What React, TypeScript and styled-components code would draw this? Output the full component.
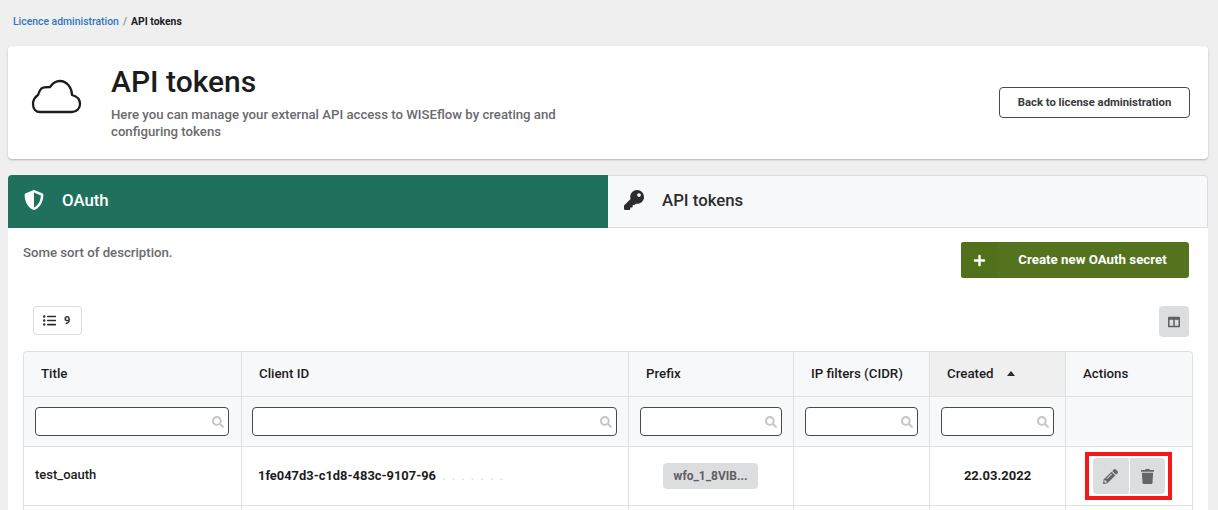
import React, { FC } from 'react';
import styled, { createGlobalStyle } from 'styled-components';
import { FaColumns, FaKey, FaListUl, FaPencilAlt, FaPlus, FaSearch, FaShieldAlt, FaTrash } from 'react-icons/fa';

const GlobalStyle = createGlobalStyle`
  html, body {
    margin: 0;
    height: 510px;
    overflow: hidden;
    background: #efefef;
    font-family: Roboto, "Noto Sans", sans-serif;
    color: #1c1c1e;
  }
  * {
    box-sizing: border-box;
  }
`;

type Column = {
  title: string;
  width: number;
  sorted?: boolean;
};

const columns: Column[] = [
  { title: 'Title', width: 218 },
  { title: 'Client ID', width: 387 },
  { title: 'Prefix', width: 165 },
  { title: 'IP filters (CIDR)', width: 136 },
  { title: 'Created', width: 136, sorted: true },
  { title: 'Actions', width: 128 },
];

const CloudIcon: FC = () => (
  <svg width="51" height="35" viewBox="0 0 51 35" fill="none">
    <path
      d="M9 33H41C46 33 49 29 49 25C49 20 45 17 41 16C41 9 36 2 29 2C24 2 21 5 19 8C15 8 11 8 10 10C8 12 8 14 7 16C4 18 2 21 2 25C2 30 5 33 9 33Z"
      stroke="#1c1c1e"
      strokeWidth="2.300"
      strokeLinejoin="round"
    />
  </svg>
);

const App: FC = () => (
  <>
    <GlobalStyle />
    <Page>
      <Breadcrumb>
        <CrumbLink>Licence administration</CrumbLink>
        <CrumbSeparator>/</CrumbSeparator>
        <CrumbCurrent>API tokens</CrumbCurrent>
      </Breadcrumb>
      <HeaderCard>
        <HeaderIcon>
          <CloudIcon />
        </HeaderIcon>
        <HeaderText>
          <PageTitle>API tokens</PageTitle>
          <PageDescription>
            Here you can manage your external API access to WISEflow by creating and configuring tokens
          </PageDescription>
        </HeaderText>
        <BackButton>Back to license administration</BackButton>
      </HeaderCard>
      <Panel>
        <Tabs>
          <Tab $active>
            <FaShieldAlt size={20} />
            <span>OAuth</span>
          </Tab>
          <Tab>
            <FaKey size={20} />
            <span>API tokens</span>
          </Tab>
        </Tabs>
        <PanelBody>
          <TopRow>
            <Description>Some sort of description.</Description>
            <CreateButton>
              <CreateIcon>
                <FaPlus size={13} />
              </CreateIcon>
              <CreateLabel>Create new OAuth secret</CreateLabel>
            </CreateButton>
          </TopRow>
          <ToolRow>
            <CountButton>
              <FaListUl size={13} />
              <span>9</span>
            </CountButton>
            <ColumnsButton>
              <FaColumns size={12} />
            </ColumnsButton>
          </ToolRow>
          <TableFrame>
            <Table>
              <colgroup>
                {columns.map((column) => (
                  <col key={column.title} width={column.width} />
                ))}
              </colgroup>
              <thead>
                <HeadRow>
                  {columns.map((column) => (
                    <HeadCell key={column.title} $sorted={column.sorted}>
                      {column.title}
                      {column.sorted && <SortArrow />}
                    </HeadCell>
                  ))}
                </HeadRow>
                <FilterRow>
                  {columns.map((column) => (
                    <FilterCell key={column.title}>
                      {column.title !== 'Actions' && (
                        <FilterBox>
                          <FaSearch size={12} />
                        </FilterBox>
                      )}
                    </FilterCell>
                  ))}
                </FilterRow>
              </thead>
              <tbody>
                <DataRow>
                  <TitleCell>test_oauth</TitleCell>
                  <ClientCell>
                    1fe047d3-c1d8-483c-9107-96
                    <Redacted>. . . . . . .</Redacted>
                  </ClientCell>
                  <CenterCell>
                    <PrefixChip>wfo_1_8VIB...</PrefixChip>
                  </CenterCell>
                  <CenterCell />
                  <DateCell>22.03.2022</DateCell>
                  <ActionsCell>
                    <Highlight>
                      <ActionButton>
                        <FaPencilAlt size={15} />
                      </ActionButton>
                      <ActionButton>
                        <FaTrash size={15} />
                      </ActionButton>
                    </Highlight>
                  </ActionsCell>
                </DataRow>
                <EmptyRow>
                  {columns.map((column) => (
                    <EmptyCell key={column.title} />
                  ))}
                </EmptyRow>
              </tbody>
            </Table>
          </TableFrame>
        </PanelBody>
      </Panel>
    </Page>
  </>
);

export default App;

const Page = styled.div`
  height: 510px;
  padding: 0 10px 0 8px;
  overflow: hidden;
`;

const Breadcrumb = styled.div`
  display: flex;
  align-items: center;
  height: 46px;
  padding: 0 0 4px 5px;
  font-size: 10.400px;
  font-weight: 500;
`;

const CrumbLink = styled.span`
  color: #2f77bc;
`;

const CrumbSeparator = styled.span`
  margin: 0 4px;
  color: #8a8a8e;
`;

const CrumbCurrent = styled.span`
  font-weight: 700;
  color: #1c1c1e;
`;

const HeaderCard = styled.div`
  display: flex;
  align-items: center;
  height: 113px;
  padding-right: 18px;
  background: #fff;
  border-radius: 4px;
  box-shadow: 0 1px 2px rgba(0, 0, 0, 0.25);
`;

const HeaderIcon = styled.div`
  display: flex;
  justify-content: center;
  width: 103px;
  padding: 0 7px 12px 0;
`;

const HeaderText = styled.div`
  flex: 1;
  padding-bottom: 2px;
`;

const PageTitle = styled.h1`
  margin: 0 0 7px;
  font-size: 30px;
  line-height: 35px;
  font-weight: 500;
  color: #1c1c1e;
`;

const PageDescription = styled.p`
  margin: 0;
  width: 470px;
  font-size: 13.200px;
  line-height: 17px;
  font-weight: 500;
  color: #6a6a6e;
`;

const BackButton = styled.button`
  height: 31px;
  width: 191px;
  padding: 0;
  font-family: inherit;
  font-size: 11.300px;
  font-weight: 700;
  color: #3a3a3c;
  background: #fff;
  border: 1px solid #4a4a4c;
  border-radius: 4px;
`;

const Panel = styled.div`
  margin-top: 16px;
  background: #fff;
  border-radius: 4px 4px 0 0;
`;

const Tabs = styled.div`
  display: grid;
  grid-template-columns: 600px 1fr;
`;

const Tab = styled.div<{ $active?: boolean }>`
  display: flex;
  align-items: center;
  gap: 18px;
  height: 53px;
  padding: 0 0 3px 16px;
  font-size: 16.800px;
  font-weight: 500;
  color: ${({ $active }) => ($active ? '#fff' : '#2c2c2e')};
  background: ${({ $active }) => ($active ? '#1f705d' : '#f7f8fa')};
  border: ${({ $active }) => ($active ? '0' : '1px solid #dcdcde')};
  border-left: 0;
  border-radius: ${({ $active }) => ($active ? '4px 0 0 0' : '0 4px 0 0')};
`;

const PanelBody = styled.div`
  padding: 14px 15px 0;
`;

const TopRow = styled.div`
  display: flex;
  align-items: flex-start;
  justify-content: space-between;
  height: 50px;
  padding-right: 4px;
`;

const Description = styled.div`
  padding: 3px 0 0;
  font-size: 13.200px;
  line-height: 16px;
  font-weight: 500;
  color: #6a6a6e;
`;

const CreateButton = styled.button`
  display: flex;
  align-items: stretch;
  width: 228px;
  height: 36px;
  padding: 0;
  font-family: inherit;
  color: #fff;
  background: #55731f;
  border: 0;
  border-radius: 3px;
  overflow: hidden;
`;

const CreateIcon = styled.span`
  display: flex;
  align-items: center;
  justify-content: center;
  width: 36px;
  background: #51701c;
`;

const CreateLabel = styled.span`
  flex: 1;
  align-self: center;
  padding: 0 1px 2px 0;
  font-size: 13.300px;
  font-weight: 700;
  text-align: center;
  white-space: nowrap;
`;

const ToolRow = styled.div`
  display: flex;
  align-items: flex-start;
  justify-content: space-between;
  height: 31px;
  margin: 14px 4px 14px 10px;
`;

const CountButton = styled.div`
  display: flex;
  align-items: center;
  gap: 8px;
  width: 49px;
  height: 29px;
  padding-left: 9px;
  font-size: 11px;
  font-weight: 700;
  color: #2c2c2e;
  border: 1px solid #dcdcde;
  border-radius: 4px;
`;

const ColumnsButton = styled.div`
  display: flex;
  align-items: center;
  justify-content: center;
  width: 30px;
  height: 31px;
  color: #5f5f63;
  background: #dcdddf;
  border-radius: 4px;
`;

const TableFrame = styled.div`
  width: 1170px;
  border: 1px solid #dfe0e2;
  border-bottom: 0;
  border-radius: 4px 4px 0 0;
  overflow: hidden;
`;

const Table = styled.table`
  width: 100%;
  table-layout: fixed;
  border-collapse: collapse;
  margin: -1px 0 0 -1px;
`;

const HeadRow = styled.tr`
  height: 45px;
  background: #f7f8fa;
`;

const HeadCell = styled.th<{ $sorted?: boolean }>`
  padding: 0 0 2px 17px;
  font-size: 13.300px;
  font-weight: 500;
  text-align: left;
  color: #1c1c1e;
  background: ${({ $sorted }) => ($sorted ? '#efefef' : 'transparent')};
  border: 1px solid #dfe0e2;
`;

const SortArrow = styled.span`
  display: inline-block;
  margin: 0 0 2px 13px;
  border-left: 4px solid transparent;
  border-right: 4px solid transparent;
  border-bottom: 5px solid #2c2c2e;
`;

const FilterRow = styled.tr`
  height: 50px;
  background: #f7f8fa;
`;

const FilterCell = styled.td`
  padding: 0 11px;
  border: 1px solid #dfe0e2;
  &:first-child {
    padding: 0 12px 0 11px;
  }
  &:nth-child(2) {
    padding-left: 10px;
  }
`;

const FilterBox = styled.div`
  display: flex;
  align-items: center;
  justify-content: flex-end;
  height: 29px;
  padding-right: 4px;
  color: #c6c6c8;
  background: #fff;
  border: 1px solid #4a4a4c;
  border-radius: 4px;
`;

const DataRow = styled.tr`
  height: 59px;
  background: #fff;
`;

const TitleCell = styled.td`
  padding: 0 0 4px 11px;
  font-size: 13px;
  font-weight: 500;
  border: 1px solid #dfe0e2;
`;

const ClientCell = styled.td`
  padding: 0 0 2px 16px;
  font-size: 12.900px;
  font-weight: 700;
  white-space: nowrap;
  border: 1px solid #dfe0e2;
`;

const Redacted = styled.span`
  margin-left: 6px;
  font-weight: 400;
  letter-spacing: 1.500px;
  color: #d4d4d6;
`;

const CenterCell = styled.td`
  padding-right: 2px;
  text-align: center;
  border: 1px solid #dfe0e2;
`;

const PrefixChip = styled.span`
  display: inline-block;
  width: 95px;
  height: 26px;
  font-size: 12px;
  line-height: 26px;
  font-weight: 700;
  color: #5f5f63;
  background: #dcdddf;
  border-radius: 4px;
`;

const DateCell = styled.td`
  padding-bottom: 2px;
  font-size: 13px;
  font-weight: 700;
  text-align: center;
  border: 1px solid #dfe0e2;
`;

const ActionsCell = styled.td`
  padding: 0 0 0 19px;
  border: 1px solid #dfe0e2;
`;

const Highlight = styled.div`
  display: flex;
  gap: 1px;
  width: 87px;
  height: 48px;
  padding: 6px 7px 6px 8px;
  outline: 4px solid #f51818;
  outline-offset: -4px;
`;

const ActionButton = styled.div`
  display: flex;
  flex: 1;
  align-items: center;
  justify-content: center;
  color: #66666a;
  background: #dcdddf;
  &:first-child {
    border-radius: 4px 0 0 4px;
  }
  &:last-child {
    border-radius: 0 4px 4px 0;
  }
`;

const EmptyRow = styled.tr`
  height: 30px;
  background: #fff;
`;

const EmptyCell = styled.td`
  border: 1px solid #dfe0e2;
`;
